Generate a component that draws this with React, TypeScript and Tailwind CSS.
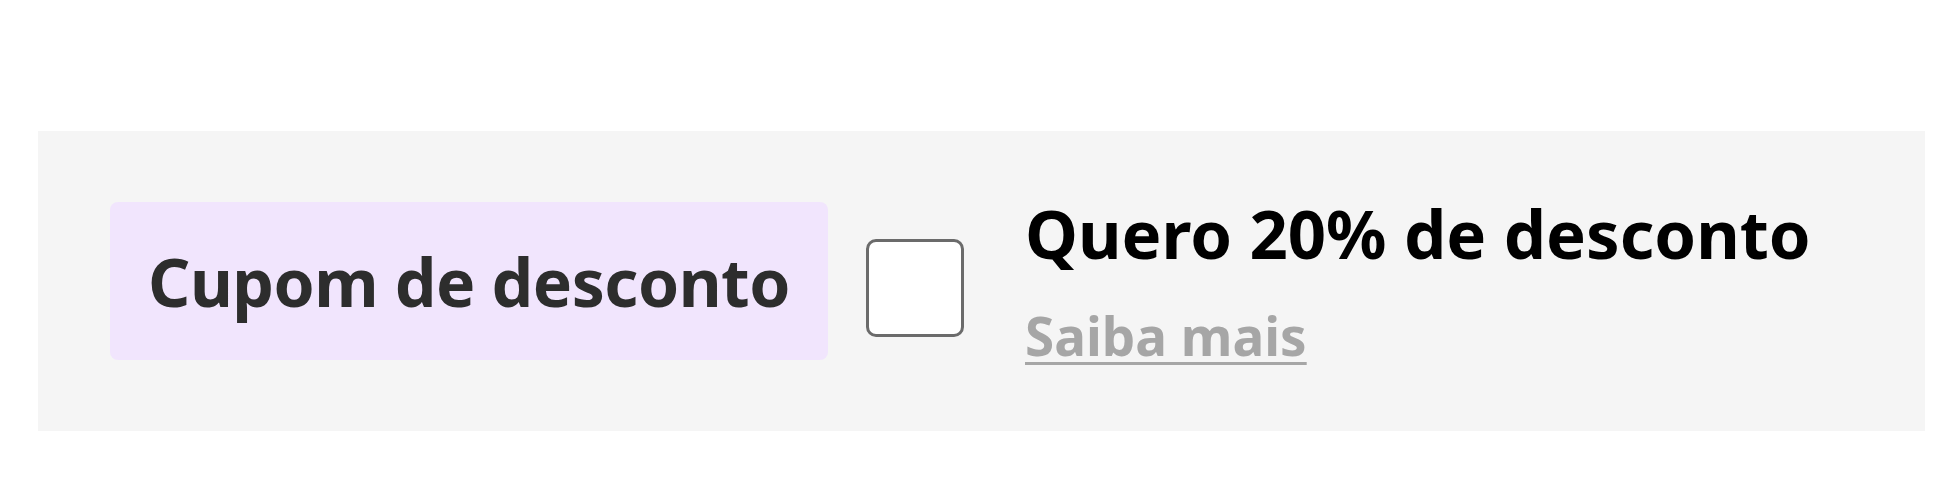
import React from "react";

const App = () => {
  return (
    <div className="w-[1959px] h-[500px] bg-white pt-[131px] pl-[38px]" style={{ fontFamily: "'Noto Sans', sans-serif" }}>
      <section className="w-[1887px] h-[300px] bg-[#f5f5f5] flex items-center pl-[72px]">
        <div className="w-[718px] h-[158px] rounded-[8px] bg-[#f1e5fd] flex items-center justify-center">
          <span className="text-[66px] font-bold text-[#2d2d2d] leading-none tracking-[-0.5px]">Cupom de desconto</span>
        </div>
        <label className="flex items-center ml-[38px]">
          <span className="w-[98px] h-[98px] rounded-[10px] border-[3px] border-[#6b6b6b] bg-white mt-[14px]" />
          <span className="flex flex-col ml-[61px]">
            <span className="text-[67px] font-bold text-black leading-none">Quero 20% de desconto</span>
            <a href="#" className="mt-[42px] text-[53px] font-bold text-[#a6a6a6] leading-none underline decoration-[3px] underline-offset-[6px] w-fit">
              Saiba mais
            </a>
          </span>
        </label>
      </section>
    </div>
  );
};

export default App;
